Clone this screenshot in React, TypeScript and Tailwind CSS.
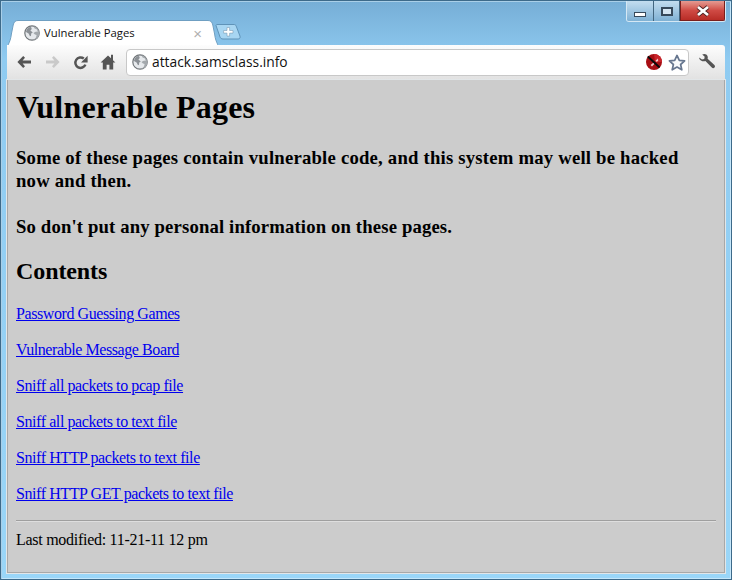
const links = [
  "Password Guessing Games",
  "Vulnerable Message Board",
  "Sniff all packets to pcap file",
  "Sniff all packets to text file",
  "Sniff HTTP packets to text file",
  "Sniff HTTP GET packets to text file",
]

function Globe({ size = 16 }: { size?: number }) {
  return (
    <svg width={size} height={size} viewBox="0 0 16 16" className="shrink-0">
      <circle cx="8" cy="8" r="7.2" fill="#e6e9ec" stroke="#6f7478" strokeWidth="1.2" />
      <path d="M5 2.2C3.2 3.4 2.2 5 2 7l2.6 1.6 1.4 2.6 1-.4.2-2.2 1.6-1.2L6.4 5.6 7.8 4 7 2z" fill="#8b9095" />
      <path d="M9.6 1.6l1 2 2 .6 1.4 2.2-2.4.4-2.2 1.2 1.6 1.6 1.6.4-.6 2.4-2 2.2c3.2-.2 5.4-3 5.4-6.2 0-3-2.2-5.8-4.8-6.8z" fill="#a4a9ad" />
    </svg>
  )
}

function Back({ color }: { color: string }) {
  return (
    <svg width="14" height="12" viewBox="0 0 14 12">
      <path d="M6.2 0 .4 6l5.8 6L8 10.2 5.6 7.5H14v-3H5.6L8 1.8z" fill={color} />
    </svg>
  )
}

function Forward({ color }: { color: string }) {
  return (
    <svg width="14" height="12" viewBox="0 0 14 12">
      <path d="M7.8 0l5.8 6-5.8 6L6 10.2l2.4-2.7H0v-3h8.4L6 1.8z" fill={color} />
    </svg>
  )
}

function Reload() {
  return (
    <svg width="15" height="15" viewBox="0 0 15 15">
      <path d="M12.4 9.6A5.2 5.2 0 1 1 10.8 3.6" fill="none" stroke="#555" strokeWidth="2.5" />
      <path d="M14.6 .8V7.4H8z" fill="#555" />
    </svg>
  )
}

function Home() {
  return (
    <svg width="16" height="16" viewBox="0 0 16 16">
      <path d="M8 1.6 .6 8.6h2.2v6.8h3.8v-4.6h2.8v4.6h3.800V8.6h2.2l-2.4-2.4V.8h-2v3.4z" fill="#555" />
    </svg>
  )
}

function Wrench() {
  return (
    <svg width="18" height="18" viewBox="0 0 18 18">
      <path d="M1.2 4.4 4 6.6l2.2-.6.5-2.3L4.2 1.6C6.4.4 8.8 1.2 9.6 3.2c.3.9.3 1.8 0 2.6l6.8 6.2c.8.8.8 1.9.1 2.6-.8.8-1.9.8-2.7 0L7.4 8C5.4 8.8 3 8.2 1.8 6.6c-.4-.6-.6-1.4-.6-2.2z" fill="#555" />
    </svg>
  )
}

function Star() {
  return (
    <svg width="18" height="17" viewBox="0 0 18 17">
      <path d="M9 1.4l2.3 5 5.3.5-4 3.6 1.2 5.3L9 13l-4.8 2.8 1.2-5.3-4-3.6 5.3-.5z" fill="#f8fafc" stroke="#66768f" strokeWidth="1.7" strokeLinejoin="round" />
    </svg>
  )
}

function Blocked() {
  return (
    <svg width="16" height="16" viewBox="0 0 16 16">
      <circle cx="8" cy="8" r="8" fill="#a80f14" />
      <path d="M8 0a8 8 0 0 1 8 8H9z" fill="#c8242a" />
      <path d="M12 4.4 9.6 6.4l1 1.6 1.6-1.2zM7.6 8.6l-3 2.4 1.4 1.4 2.6-2.6z" fill="#f1c9ca" />
      <path d="M1.8 2.6 13.6 13.4" stroke="#0a0a0a" strokeWidth="2" />
    </svg>
  )
}

function TabFlare({ flip }: { flip?: boolean }) {
  return (
    <svg width="10" height="25" viewBox="0 0 10 25" className={flip ? "shrink-0 -scale-x-100" : "shrink-0"}>
      <path d="M10 .5C7 .5 6 2 5.2 5L3.4 14C2.8 19 1.6 22 0 25h10z" fill="#fff" />
      <path d="M10 .5C7 .5 6 2 5.2 5L3.4 14C2.8 19 1.6 22 0 25" fill="none" stroke="#6f9fc2" strokeWidth="1" />
    </svg>
  )
}

function NewTab() {
  return (
    <svg width="27" height="16" viewBox="0 0 27 16" className="mb-[5px] -ml-[3px] shrink-0">
      <path d="M1 1.5C1 1 1.4.5 2 .5h17c1 0 1.8.5 2.2 1.6l3.8 10c.5 1.4-.2 2.9-1.8 2.9H8c-1.6 0-2.5-.8-3-2L1 1.5z" fill="#a8d6f2" stroke="#5f93b8" />
      <path d="M12 3.500h2.600v3H18v2.600h-3.400v3H12v-3H8.600V6.500H12z" fill="#fff" stroke="#7d9cb4" strokeWidth=".6" />
    </svg>
  )
}

export default function App() {
  return (
    <div className="relative h-[580px] w-[732px] overflow-hidden border border-[#3d6a8a] bg-gradient-to-b from-[#76aed6] from-0% via-[#8fcbf1] via-[10%] to-[#9ad6f8] px-[6px] pb-[6px] pt-[19px] font-['Liberation_Sans',sans-serif] shadow-[inset_1px_1px_0_#a9cfe8,inset_-1px_-1px_0_#c4e6fa]">
      {/* Window buttons */}
      <div className="absolute right-[5px] top-0 flex h-[21px] overflow-hidden rounded-b-[3px] border border-t-0 border-[#d5e8f4]">
        <div className="flex w-[27px] items-end justify-center border-r border-[#43667f] bg-gradient-to-b from-[#c3ddef] to-[#7fb1d4] pb-[4px]">
          <div className="h-[5px] w-[12px] border border-[#37495a] bg-white" />
        </div>
        <div className="flex w-[26px] items-center justify-center border-r border-[#43667f] bg-gradient-to-b from-[#c3ddef] to-[#7fb1d4]">
          <div className="h-[9px] w-[12px] border-2 border-[#37495a] bg-[#d6e6f2]" />
        </div>
        <div className="flex w-[45px] items-center justify-center border border-t-0 border-[#7a1e1b] bg-gradient-to-b from-[#e49a92] via-[#cf4a44] to-[#b82c26]">
          <svg width="16" height="12" viewBox="0 0 16 12">
            <path d="M3 2l10 8M13 2 3 10" stroke="#4a2020" strokeWidth="4.4" />
            <path d="M3 2l10 8M13 2 3 10" stroke="#fff" strokeWidth="2.8" />
          </svg>
        </div>
      </div>

      {/* Tab strip */}
      <div className="flex h-[25px] items-end pl-[1px]">
        <TabFlare />
        <div className="flex h-[25px] w-[190px] items-center border-t border-[#6f9fc2] bg-white pl-[6px] pr-[6px]">
          <Globe />
          <span className="ml-[4px] font-['Open_Sans',sans-serif] text-[11.3px] text-[#111]">Vulnerable Pages</span>
          <span className="ml-auto text-[15px] leading-none text-[#b0b0b0]">×</span>
        </div>
        <TabFlare flip />
        <NewTab />
      </div>

      {/* Toolbar */}
      <div className="flex h-[35px] items-center rounded-tr-[3px] border-b border-[#a0a0a0] bg-gradient-to-b from-[#fdfdfd] to-[#e2e2e2] pl-[10px] pr-[9px]">
        <Back color="#555" />
        <div className="ml-[15px] flex"><Forward color="#c9c9c9" /></div>
        <div className="ml-[13px] flex"><Reload /></div>
        <div className="ml-[12px] flex"><Home /></div>
        <div className="ml-[10px] flex h-[27px] w-[563px] items-center rounded-[4px] border border-[#c8c8c8] bg-white pl-[5px] pr-[2px]">
          <Globe />
          <span className="ml-[4px] pt-[1px] font-['Open_Sans',sans-serif] text-[13.8px] text-[#111]">attack.samsclass.info</span>
          <div className="ml-auto flex items-center gap-[6px]">
            <Blocked />
            <Star />
          </div>
        </div>
        <div className="ml-auto flex"><Wrench /></div>
      </div>

      {/* Page */}
      <div className="h-[493px] border border-t-0 border-[#a8a8a8] bg-[#cccccc] px-[8px] font-['Liberation_Serif',serif] text-black shadow-[0_0_0_1px_#e2e6e8]">
        <h1 className="pt-[9px] text-[32px] font-bold leading-[37px] tracking-[0.19px]">Vulnerable Pages</h1>
        <h3 className="mt-[20px] max-w-[680px] text-[18.72px] font-bold leading-[23px] tracking-[0.14px]">
          <span className="tracking-[0.205px]">Some of these pages contain vulnerable code, and this system may well be hacked now and then.</span>
          <br />
          <br />
          So don't put any personal information on these pages.
        </h3>
        <h2 className="mt-[19px] text-[24px] font-bold leading-[28px] tracking-[-0.1px]">Contents</h2>
        <div className="mt-[20px] flex flex-col gap-[18px]">
          {links.map((link) => (
            <a key={link} href="#" className="text-[16px] leading-[18px] tracking-[-0.42px] text-[#0000ee] underline">
              {link}
            </a>
          ))}
        </div>
        <hr className="mt-[17px] h-[2px] border-0 border-t border-b border-t-[#9f9f9f] border-b-[#dedede]" />
        <p className="mt-[9px] text-[16px] leading-[18px] tracking-[-0.28px]">Last modified: 11-21-11 12 pm</p>
      </div>
    </div>
  )
}
